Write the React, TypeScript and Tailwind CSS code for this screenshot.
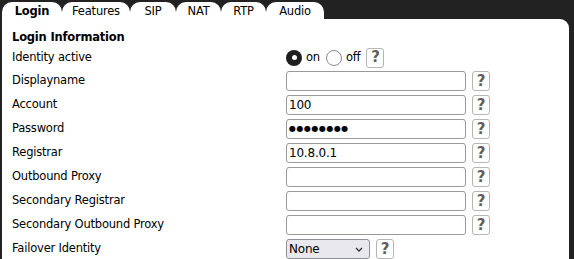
import React from "react";

const font = { fontFamily: '"DejaVu Sans", Verdana, sans-serif' };

function Help() {
  return (
    <div className="ml-[6px] flex h-[20px] w-[18px] items-center justify-center rounded-[3px] border border-[#b5b5b5] bg-white text-[15px] font-bold leading-none text-[#5f5f5f]">
      ?
    </div>
  );
}

function Row({ label, children }: { label: string; children: React.ReactNode }) {
  return (
    <div className="flex h-[24px] items-center">
      <div className="w-[274px] text-[11.5px] tracking-[-0.2px] text-black">{label}</div>
      <div className="flex items-center">{children}</div>
    </div>
  );
}

function Input({ value = "", small = false }: { value?: string; small?: boolean }) {
  return (
    <div
      className={`flex h-[20px] w-[180px] items-center rounded-[3px] border border-[#9a9a9a] bg-white px-[2px] text-black ${
        small ? "text-[8px] tracking-[0.5px]" : "text-[12px] tracking-[-0.2px]"
      }`}
    >
      {value}
    </div>
  );
}

const tabs = [
  { name: "Login", w: 60, active: true },
  { name: "Features", w: 68 },
  { name: "SIP", w: 46 },
  { name: "NAT", w: 45 },
  { name: "RTP", w: 45 },
  { name: "Audio", w: 58 },
];

export default function App() {
  return (
    <div className="h-[259px] w-[574px] overflow-hidden bg-[#222222] pl-[2px] pr-[5px] pt-[2px]" style={font}>
      <div className="flex h-[17px]">
        {tabs.map((t) => (
          <div
            key={t.name}
            style={{ width: t.w }}
            className={`flex items-center justify-center rounded-t-[10px] bg-white pt-[2px] text-[11.5px] tracking-[-0.2px] text-black ${t.active ? "font-bold" : ""}`}
          >
            {t.name}
          </div>
        ))}
      </div>
      <div className="h-[240px] rounded-tr-[9px] bg-white pl-[10px] pt-[10px]">
        <div className="h-[17px] text-[11.5px] font-bold tracking-[-0.2px] text-black">Login Information</div>
        <div className="flex h-[23px] items-center">
          <div className="w-[274px] text-[11.5px] tracking-[-0.2px] text-black">Identity active</div>
          <div className="flex items-center text-[11.5px] tracking-[-0.2px]">
            <div className="flex h-[16px] w-[16px] items-center justify-center rounded-full bg-[#1f1f1f]">
              <div className="h-[5px] w-[5px] rounded-full bg-white" />
            </div>
            <span className="ml-[4px]">on</span>
            <div className="ml-[6px] h-[16px] w-[16px] rounded-full border border-[#8a8a8a] bg-white" />
            <span className="ml-[4px]">off</span>
            <Help />
          </div>
        </div>
        <Row label="Displayname"><Input /><Help /></Row>
        <Row label="Account"><Input value="100" /><Help /></Row>
        <Row label="Password">
          <Input value="●●●●●●●●" small />
          <Help />
        </Row>
        <Row label="Registrar"><Input value="10.8.0.1" /><Help /></Row>
        <Row label="Outbound Proxy"><Input /><Help /></Row>
        <Row label="Secondary Registrar"><Input /><Help /></Row>
        <Row label="Secondary Outbound Proxy"><Input /><Help /></Row>
        <Row label="Failover Identity">
          <div className="flex h-[20px] w-[84px] items-center justify-between rounded-[3px] border border-[#8f8f9d] bg-[#e9e9ed] pl-[2px] pr-[6px] text-[12px] tracking-[-0.2px] text-black">
            <span>None</span>
            <svg width="8" height="5" viewBox="0 0 8 5"><path d="M1 1l3 3 3-3" fill="none" stroke="#333" strokeWidth="1.3" /></svg>
          </div>
          <Help />
        </Row>
      </div>
    </div>
  );
}
